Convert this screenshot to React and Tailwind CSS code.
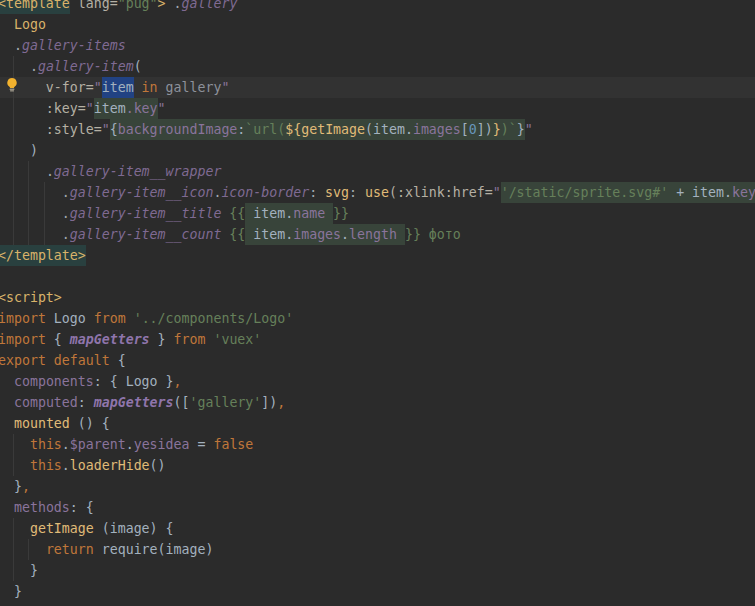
const tag = "text-[#d9b36a]";
const attr = "text-[#b5b0a4]";
const str = "text-[#66805a]";
const cls = "italic text-[#7f6a92]";
const dot = "text-[#a0a8b0]";
const txt = "text-[#a3b1bf]";
const kw = "text-[#c0773a]";
const prop = "text-[#8a749c]";
const fn = "text-[#e0bb78]";
const bold = "italic font-bold text-[#8f75ab]";
const muted = "text-[#66805a]";
const grey = "text-[#8d919b]";
const tealBg = "bg-[#29403f]";
const greenBg = "bg-[#38443a]";
const blueBg = "bg-[#214283]";

// every line: tokens of [text, classes], guides are indent lines in px
const lines = [
  { tokens: [["<template", `${tag} ${tealBg}`], [" lang=", attr], ['"pug"', str], [">", tag], [" ", txt], [".", dot], ["gallery", cls]] },
  { tokens: [["  Logo", tag]] },
  { tokens: [["  ", txt], [".", dot], ["gallery-items", cls]] },
  { tokens: [["    ", txt], [".", dot], ["gallery-item", cls], ["(", txt]], guides: [13] },
  {
    caret: true,
    guides: [13],
    tokens: [["      v-for=", attr], ['"', prop], ["item", `${txt} ${blueBg}`], [" in", kw], [" gallery", grey], ['"', prop]],
  },
  { tokens: [["      :key=", attr], ['"', prop], ["item", `${txt} ${greenBg}`], [".key", `${prop} ${greenBg}`], ['"', prop]], guides: [13] },
  {
    guides: [13],
    tokens: [
      ["      :style=", attr],
      ['"', prop],
      ["{", `${txt} ${greenBg}`],
      ["backgroundImage", `${prop} ${greenBg}`],
      [":", `${txt} ${greenBg}`],
      ["`url(", `${str} ${greenBg}`],
      ["${", `${fn} ${greenBg}`],
      ["getImage", `${fn} ${greenBg}`],
      ["(item.", `${txt} ${greenBg}`],
      ["images", `${prop} ${greenBg}`],
      ["[", `${txt} ${greenBg}`],
      ["0", `text-[#6897bb] ${greenBg}`],
      ["])", `${txt} ${greenBg}`],
      ["}", `${fn} ${greenBg}`],
      [")`", `${str} ${greenBg}`],
      ["}", `${txt} ${greenBg}`],
      ['"', prop],
    ],
  },
  { tokens: [["    )", txt]], guides: [13] },
  { tokens: [["      ", txt], [".", dot], ["gallery-item__wrapper", cls]], guides: [13, 28] },
  {
    guides: [13, 28, 44],
    tokens: [
      ["        ", txt],
      [".", dot],
      ["gallery-item__icon", cls],
      [".", dot],
      ["icon-border", cls],
      [": ", dot],
      ["svg", fn],
      [": ", dot],
      ["use", fn],
      ["(:xlink:href=", attr],
      ['"', prop],
      ["'/static/sprite.svg#'", `${str} ${greenBg}`],
      [" + item.", `${txt} ${greenBg}`],
      ["key", `${prop} ${greenBg}`],
    ],
  },
  {
    guides: [13, 28, 44],
    tokens: [
      ["        ", txt],
      [".", dot],
      ["gallery-item__title", cls],
      [" {{", str],
      [" item.", `${txt} ${greenBg}`],
      ["name ", `${prop} ${greenBg}`],
      ["}}", str],
    ],
  },
  {
    guides: [13, 28, 44],
    tokens: [
      ["        ", txt],
      [".", dot],
      ["gallery-item__count", cls],
      [" {{", str],
      [" item.", `${txt} ${greenBg}`],
      ["images", `${prop} ${greenBg}`],
      [".", `${txt} ${greenBg}`],
      ["length ", `${prop} ${greenBg}`],
      ["}}", str],
      [" фото", muted],
    ],
  },
  { tokens: [["</template>", `${tag} ${tealBg}`]] },
  { tokens: [] },
  { tokens: [["<script>", tag]] },
  { tokens: [["import", kw], [" Logo ", txt], ["from", kw], [" '../components/Logo'", str]] },
  { tokens: [["import", kw], [" { ", txt], ["mapGetters", bold], [" } ", txt], ["from", kw], [" 'vuex'", str]] },
  { tokens: [["export default", kw], [" {", txt]] },
  { tokens: [["  ", txt], ["components", prop], [": { Logo }", txt], [",", kw]] },
  { tokens: [["  ", txt], ["computed", prop], [": ", txt], ["mapGetters", bold], ["([", txt], ["'gallery'", str], ["])", txt], [",", kw]] },
  { tokens: [["  ", txt], ["mounted", fn], [" () {", txt]] },
  { tokens: [["    ", txt], ["this", kw], [".", txt], ["$parent", prop], [".", txt], ["yesidea", prop], [" = ", txt], ["false", kw]], guides: [13] },
  { tokens: [["    ", txt], ["this", kw], [".", txt], ["loaderHide", fn], ["()", txt]], guides: [13] },
  { tokens: [["  }", txt], [",", kw]] },
  { tokens: [["  ", txt], ["methods", prop], [": {", txt]] },
  { tokens: [["    ", txt], ["getImage", fn], [" (image) {", txt]], guides: [13] },
  { tokens: [["      ", txt], ["return", kw], [" require(image)", txt]], guides: [13, 28] },
  { tokens: [["    }", txt]], guides: [13] },
  { tokens: [["  }", txt]] },
];

function Bulb() {
  return (
    <svg viewBox="0 0 14 16" className="absolute left-[5px] top-0 h-[15px] w-[14px]">
      <path d="M7 1a5 5 0 0 0-3 9c.6.5 1 1 1 1.6h4c0-.6.4-1.100 1-1.600a5 5 0 0 0-3-9z" fill="#f2b22e" />
      <rect x="4.500" y="12.500" width="5" height="1" fill="#c9c2ae" />
      <rect x="5" y="14.300" width="4" height="1" fill="#c9c2ae" />
    </svg>
  );
}

export default function App() {
  return (
    <div className="h-[606px] w-[755px] overflow-hidden bg-[#2b2b2b] font-['DejaVu_Sans_Mono',monospace] text-[13.25px] leading-[21px]">
      <div className="-mt-[7px]">
        {lines.map((line, i) => (
          <div key={i} className={`relative h-[21px] whitespace-pre ${line.caret ? "bg-[#323232]" : ""}`}>
            {(line.guides || []).map((x) => (
              <span key={x} className={`absolute top-0 h-full w-px bg-[#3a3a3a] ${x === 13 ? "left-[13px]" : x === 28 ? "left-[28px]" : "left-[44px]"}`} />
            ))}
            {line.caret && <Bulb />}
            <div className="relative -ml-[2px] flex h-full">
              {line.tokens.map(([text, c], j) => (
                <span key={j} className={`h-full shrink-0 ${c}`}>{text}</span>
              ))}
            </div>
          </div>
        ))}
      </div>
    </div>
  );
}
